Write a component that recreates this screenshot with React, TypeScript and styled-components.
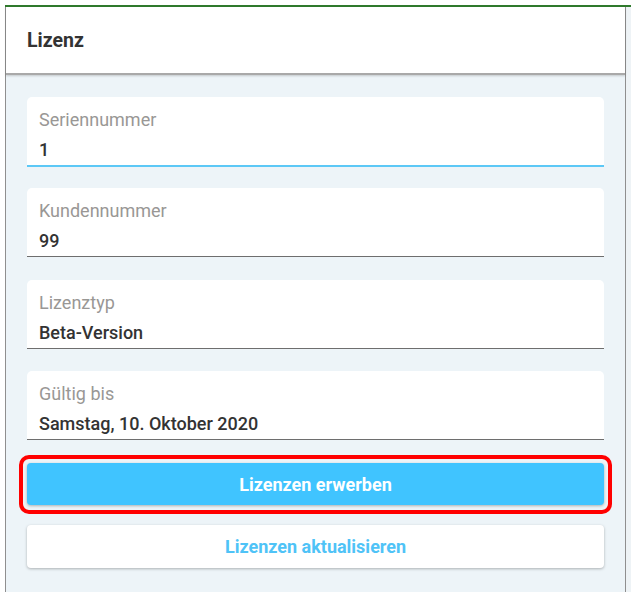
import React from "react";
import styled, { createGlobalStyle } from "styled-components";

const Global = createGlobalStyle`
  html, body { margin: 0; padding: 0; background: #ffffff; }
  body { font-family: Roboto, "Noto Sans", "Liberation Sans", sans-serif; }
  * { box-sizing: border-box; }
`;

const Frame = styled.div`
  margin: 5px 0 0 5px;
  width: 626px;
  border-top: 2px solid #2f7a2c;
  display: flex;
`;

const Panel = styled.section`
  flex: 1;
  border-left: 1px solid #8f8f8f;
  border-right: 1px solid #8f8f8f;
  display: flex;
  flex-direction: column;
`;

const Strip = styled.div`
  width: 5px;
  background: #eef3f6;
`;

const Header = styled.header`
  height: 68px;
  display: flex;
  align-items: center;
  padding-left: 21px;
  padding-top: 2px;
  background: #ffffff;
  border-bottom: 2px solid #a9a9a9;
  box-shadow: 0 1px 2px rgba(0, 0, 0, 0.18);
  position: relative;
  z-index: 1;
`;

const Title = styled.h1`
  margin: 0;
  font-size: 19.5px;
  font-weight: 700;
  color: #333333;
  line-height: 24px;
`;

const Body = styled.div`
  background: #edf4f8;
  padding: 22px 21px 24px 21px;
  display: flex;
  flex-direction: column;
`;

const Fields = styled.div`
  display: flex;
  flex-direction: column;
  gap: 21px;
`;

const Field = styled.div<{ $focused?: boolean; $extra?: number }>`
  background: #ffffff;
  border-radius: 5px 5px 0 0;
  padding: 13px 12px 4px 12px;
  border-bottom: ${(p) => (p.$focused ? "2px solid #5cc8f6" : "1px solid #6e6e6e")};
  margin-bottom: ${(p) => (p.$focused ? 0 : 1) + (p.$extra ?? 0)}px;
`;

const Label = styled.div`
  font-size: 18px;
  line-height: 20px;
  color: #999795;
`;

const Value = styled.div`
  margin-top: 9px;
  font-size: 18px;
  line-height: 22px;
  font-weight: 500;
  color: #333333;
`;

const Actions = styled.div`
  margin-top: 22px;
  display: flex;
  flex-direction: column;
  gap: 20px;
`;

const Highlight = styled.div`
  position: relative;
  &::after {
    content: "";
    position: absolute;
    left: -8px;
    right: -8px;
    top: -8px;
    bottom: -9px;
    border: 4px solid #ff0000;
    border-radius: 10px;
    pointer-events: none;
  }
`;

const Button = styled.button<{ $primary?: boolean }>`
  display: block;
  width: 100%;
  height: ${(p) => (p.$primary ? "42px" : "43px")};
  border: none;
  border-radius: 4px;
  font-family: Roboto, "Noto Sans", "Liberation Sans", sans-serif;
  font-size: 18px;
  font-weight: 700;
  background: ${(p) => (p.$primary ? "#40c4ff" : "#ffffff")};
  color: ${(p) => (p.$primary ? "#ffffff" : "#4fc3f7")};
  box-shadow: 0 1px 3px rgba(0, 0, 0, 0.28);
  cursor: pointer;
`;

const fields = [
  { label: "Seriennummer", value: "1", focused: true },
  { label: "Kundennummer", value: "99", extra: 1 },
  { label: "Lizenztyp", value: "Beta-Version" },
  { label: "Gültig bis", value: "Samstag, 10. Oktober 2020" },
];

export default function App() {
  return (
    <>
      <Global />
      <Frame>
        <Panel>
          <Header>
            <Title>Lizenz</Title>
          </Header>
          <Body>
            <Fields>
              {fields.map((f) => (
                <Field key={f.label} $focused={f.focused} $extra={f.extra}>
                  <Label>{f.label}</Label>
                  <Value>{f.value}</Value>
                </Field>
              ))}
            </Fields>
            <Actions>
              <Highlight>
                <Button $primary>Lizenzen erwerben</Button>
              </Highlight>
              <Button>Lizenzen aktualisieren</Button>
            </Actions>
          </Body>
        </Panel>
        <Strip />
      </Frame>
    </>
  );
}
